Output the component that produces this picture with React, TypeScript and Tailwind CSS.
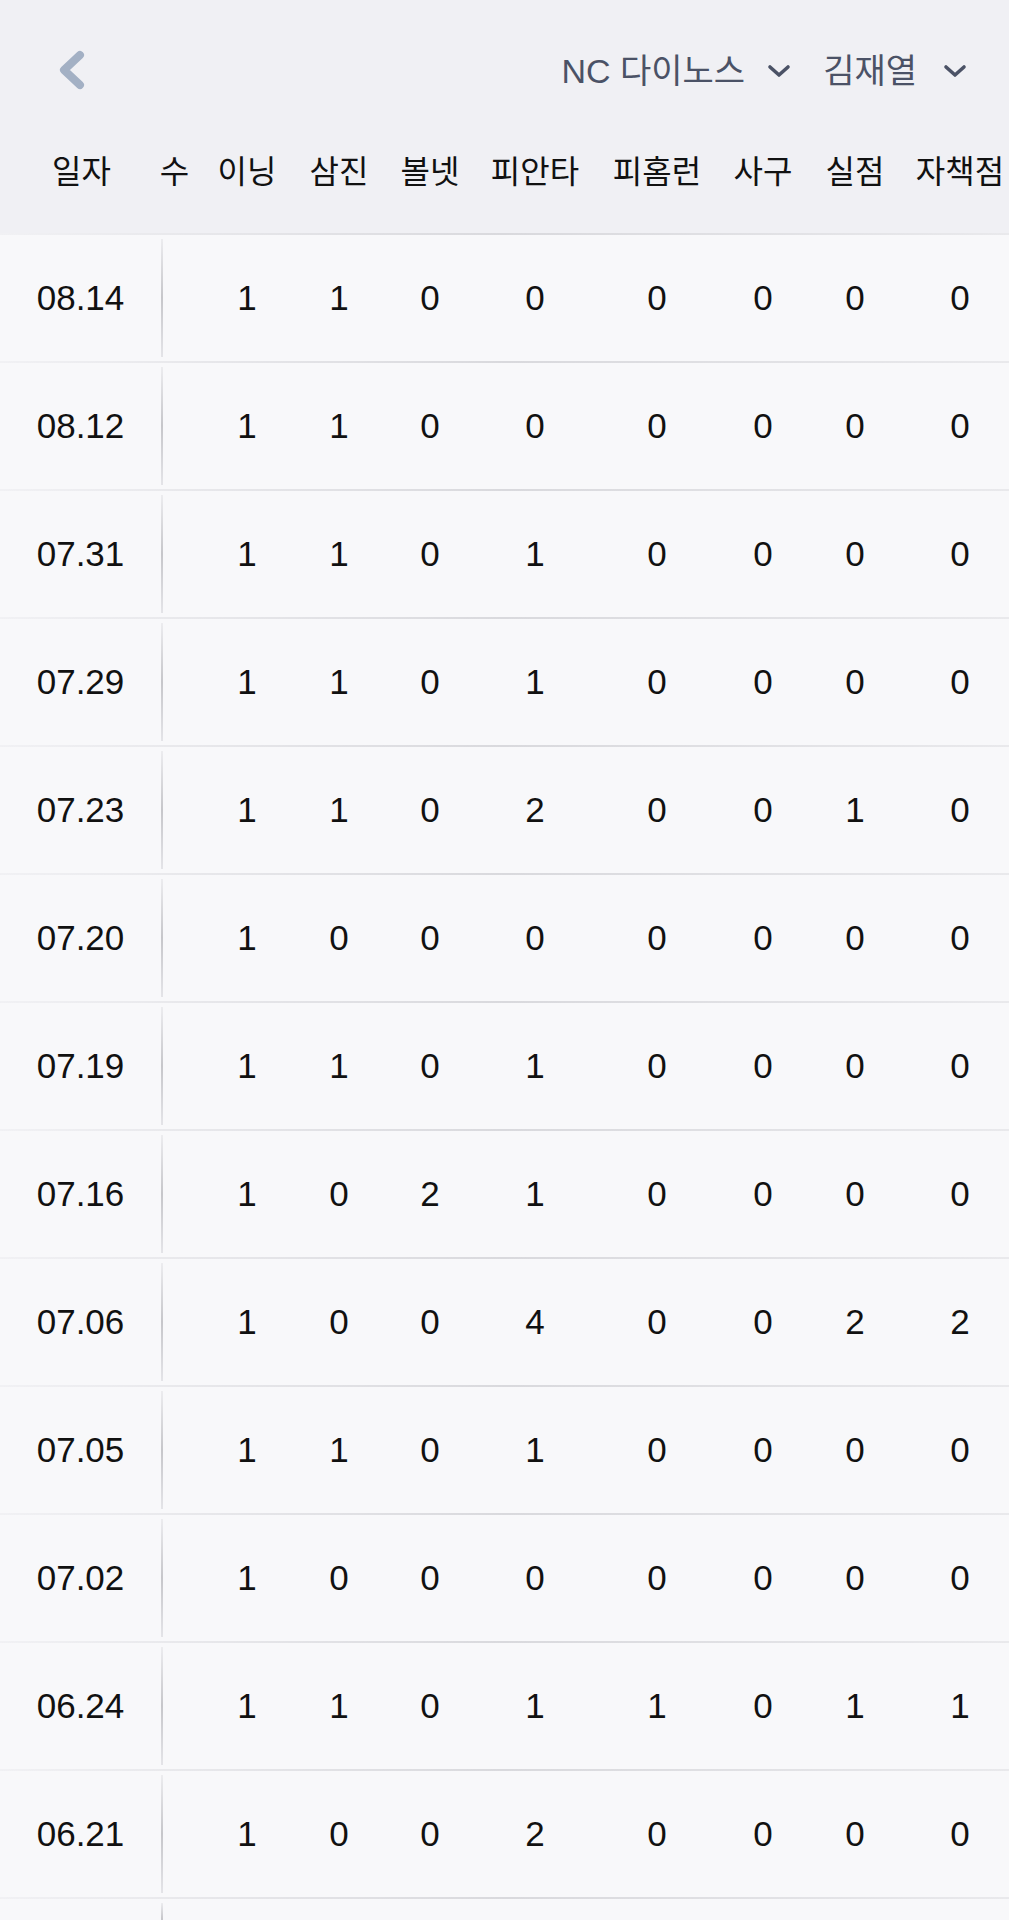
import React from "react";

const rows: [string, number[]][] = [
  ["08.14", [1, 1, 0, 0, 0, 0, 0, 0]],
  ["08.12", [1, 1, 0, 0, 0, 0, 0, 0]],
  ["07.31", [1, 1, 0, 1, 0, 0, 0, 0]],
  ["07.29", [1, 1, 0, 1, 0, 0, 0, 0]],
  ["07.23", [1, 1, 0, 2, 0, 0, 1, 0]],
  ["07.20", [1, 0, 0, 0, 0, 0, 0, 0]],
  ["07.19", [1, 1, 0, 1, 0, 0, 0, 0]],
  ["07.16", [1, 0, 2, 1, 0, 0, 0, 0]],
  ["07.06", [1, 0, 0, 4, 0, 0, 2, 2]],
  ["07.05", [1, 1, 0, 1, 0, 0, 0, 0]],
  ["07.02", [1, 0, 0, 0, 0, 0, 0, 0]],
  ["06.24", [1, 1, 0, 1, 1, 0, 1, 1]],
  ["06.21", [1, 0, 0, 2, 0, 0, 0, 0]],
];

// widths of the stat columns, left to right
const statCols = [
  "w-[122px]",
  "w-[62px]",
  "w-[120px]",
  "w-[90px]",
  "w-[154px]",
  "w-[58px]",
  "w-[126px]",
  "w-[84px]",
];

const labels = ["이닝", "삼진", "볼넷", "피안타", "피홈런", "사구", "실점", "자책점"];

function Chevron() {
  return (
    <svg width="24" height="14" viewBox="0 0 24 14" fill="none">
      <polyline
        points="3,3 12,11 21,3"
        stroke="#4b5266"
        strokeWidth="3.6"
        strokeLinecap="round"
        strokeLinejoin="round"
      />
    </svg>
  );
}

function Divider() {
  return <div className="h-[2px] w-full bg-linear-to-r from-[#f1f1f4] via-[#d9d9dd] to-[#e9e9ec]" />;
}

function Separator() {
  return <div className="my-[4px] w-[2px] bg-linear-to-b from-[#ececef] via-[#c6c6ca] to-[#e4e4e8]" />;
}

export default function App() {
  return (
    <div
      className="min-h-screen w-full bg-[#f8f8fa] text-[#111]"
      style={{ fontFamily: '"Liberation Sans", "Noto Sans CJK KR", sans-serif' }}
    >
      {/* Header */}
      <div className="flex h-[235px] flex-col bg-[#f0f0f4]">
        <div className="flex h-[142px] items-center justify-between pl-[56px] pr-[42px]">
          <button className="flex items-center">
            <svg width="32" height="44" viewBox="0 0 32 44" fill="none">
              <polyline
                points="24,6 8,21 24,36"
                stroke="#a3b0c4"
                strokeWidth="8"
                strokeLinecap="round"
                strokeLinejoin="round"
              />
            </svg>
          </button>
          <div className="flex items-center gap-[32px] text-[34px] text-[#4b5266]">
            <div className="flex items-center gap-[22px]">
              <span>NC 다이노스</span>
              <Chevron />
            </div>
            <div className="flex items-center gap-[26px]">
              <span>김재열</span>
              <Chevron />
            </div>
          </div>
        </div>
        <div className="flex h-[60px] items-center whitespace-nowrap text-[32px]">
          <div className="flex w-[163px] justify-center">일자</div>
          <div className="flex w-[23px] justify-center">수</div>
          {labels.map((l, i) => (
            <div key={l} className={`flex justify-center ${statCols[i]}`}>
              {l}
            </div>
          ))}
        </div>
        <div className="mt-auto">
          <Divider />
        </div>
      </div>

      {/* Rows */}
      {rows.map(([date, stats]) => (
        <div key={date} className="flex h-[128px] flex-col">
          <div className="flex flex-1 items-stretch text-[35px]">
            <div className="flex w-[161px] items-center justify-center">{date}</div>
            <Separator />
            <div className="w-[23px]" />
            {stats.map((v, i) => (
              <div key={i} className={`flex items-center justify-center ${statCols[i]}`}>
                {v}
              </div>
            ))}
          </div>
          <Divider />
        </div>
      ))}
      {/* next row, only its top shows */}
      <div className="flex h-[40px]">
        <div className="w-[161px]" />
        <Separator />
      </div>
    </div>
  );
}
